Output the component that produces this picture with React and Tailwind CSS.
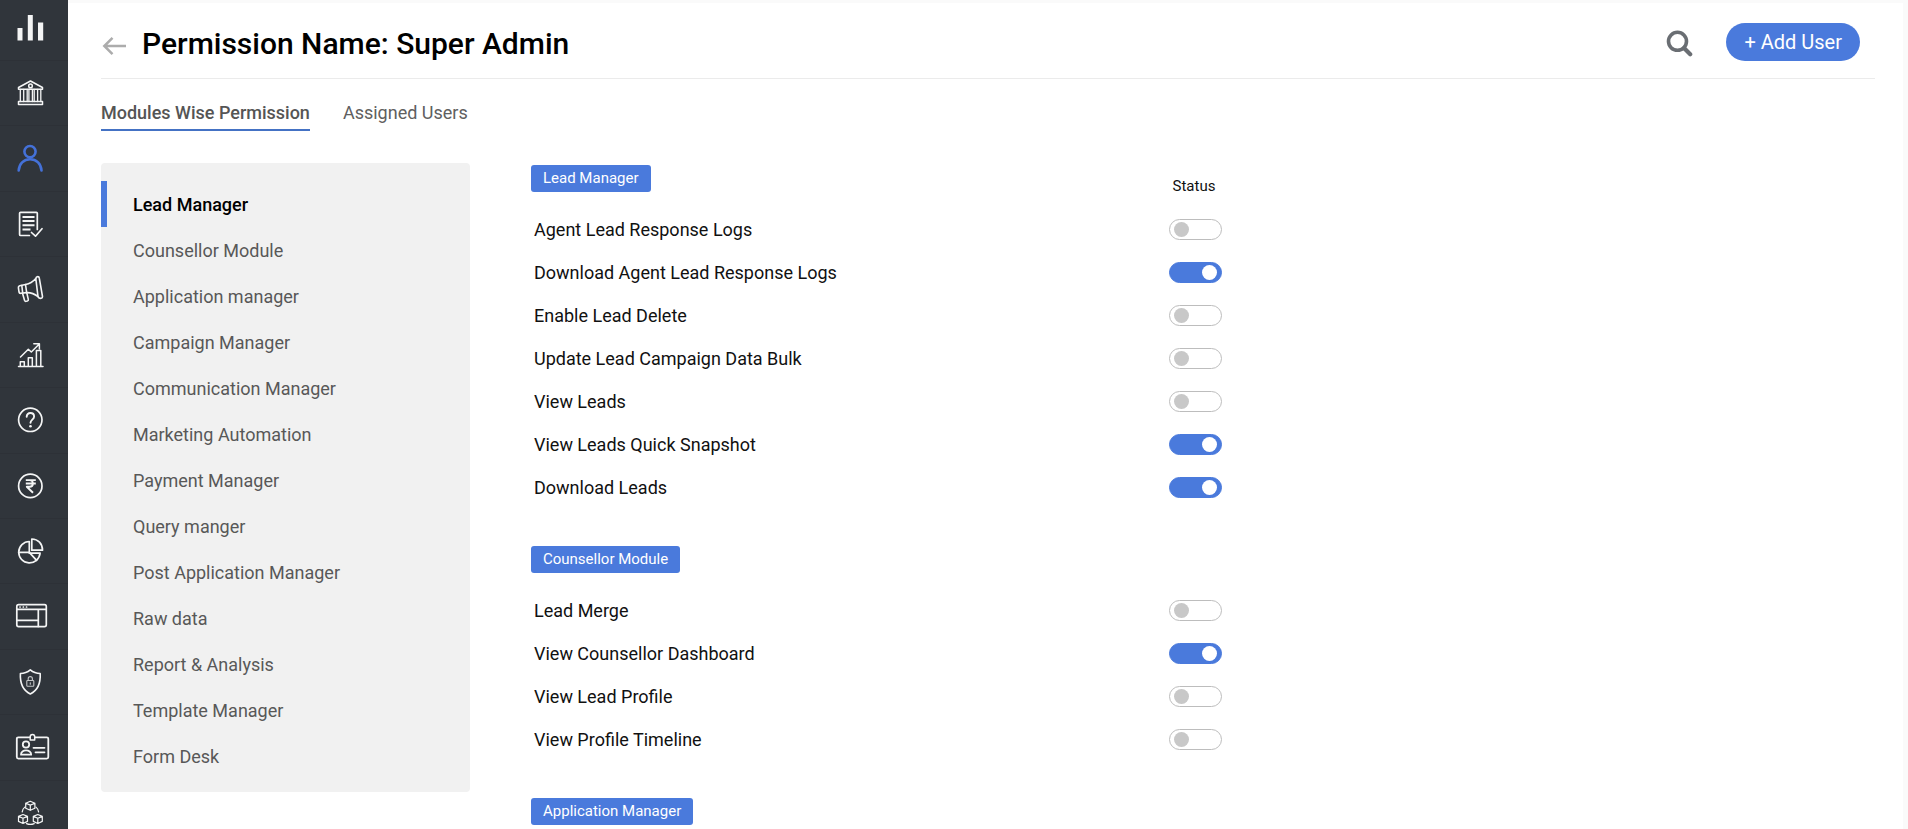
import { useState } from "react";

const navItems = [
  {
    name: "Dashboard",
    art: (
      <g fill="currentColor" stroke="none">
        <rect x="7.5" y="20" width="5" height="12.5" />
        <rect x="17.8" y="7" width="5" height="25.5" />
        <rect x="28" y="14.5" width="5.2" height="18" />
      </g>
    ),
  },
  {
    name: "Institution",
    art: (
      <g strokeWidth="1.5">
        <path d="M8.5 14.5 20.5 8l12 6.5v1.8h-24z" />
        <circle cx="20.5" cy="12.9" r="1.8" />
        <path d="M10.3 16.5v12M13.7 16.5v12M17.2 16.5v12M18.9 16.5v12M22.4 16.5v12M24.2 16.5v12M27.6 16.5v12M30.8 16.5v12" strokeWidth="1.3" />
        <rect x="8.5" y="28.6" width="24" height="2.8" />
      </g>
    ),
  },
  {
    name: "Users",
    active: true,
    art: (
      <g strokeWidth="2.6">
        <circle cx="20" cy="13.6" r="5.6" />
        <path d="M8.7 32.5c.4-6.7 5-11.2 11.4-11.2s11 4.5 11.4 11.2" />
      </g>
    ),
  },
  {
    name: "Applications",
    art: (
      <g strokeWidth="1.7">
        <path d="M27.3 25.5V9.3q0-1-1-1H10.6q-1 0-1 1v21.2q0 1 1 1h8.8" />
        <path d="M12.5 12.9h12M12.5 17h12M12.5 21.2h12M12.5 25.5h8" strokeWidth="2" strokeLinecap="butt" />
        <path d="m21.500 28.500 4 3.700 6.500-7.500" />
      </g>
    ),
  },
  {
    name: "Campaigns",
    art: (
      <g strokeWidth="1.6">
        <path d="m15.500 15.500-5.800 1.200q-1.500.4-1.300 2l.6 4.300q.3 1.500 1.800 1.300l5.900-.7c4.500-.2 8 1.400 11.300 4L25.800 9.500c-2.600 3-5.800 5.200-10.300 6z" />
        <path d="M25.800 9.500q.3-1.900 2-1.900 1.300 0 1.500 1.600l3.200 18.300q.1 1.500-1.300 1.800-2.200.4-3.200-1.700M15.500 15.500l1.200 8.100M11.800 16.500l.9 7.500" />
        <path d="m12.500 24.300 2 7q.5 1.200 1.600 1l1.300-.3q1.200-.4.900-1.600l-1.500-6.500" />
      </g>
    ),
  },
  {
    name: "Analytics",
    art: (
      <g strokeWidth="1.5">
        <path d="M8.5 31.6h24.500M10.300 31.300v-4.500h4v4.500M18.300 31.300v-8.500h4v8.500M26.400 31.300V15.500h4.400v15.800" />
        <path d="m10.500 22 7.800-7.800 3 2.800 7.500-7.500M23.800 8.700h5.600v5.200" />
      </g>
    ),
  },
  {
    name: "Help",
    art: (
      <g>
        <circle cx="20.3" cy="19.8" r="11.7" strokeWidth="1.7" />
        <path d="M16.7 16.700c0-2.300 1.600-3.700 3.700-3.700s3.700 1.400 3.700 3.500c0 3-3.600 3.200-3.600 6.300" strokeWidth="1.9" />
        <circle cx="20.5" cy="26.3" r="1.3" fill="currentColor" stroke="none" />
      </g>
    ),
  },
  {
    name: "Payments",
    art: (
      <g>
        <circle cx="20.3" cy="19.9" r="11.7" strokeWidth="1.7" />
        <path d="M15.800 14.100h10M15.800 17.500h10M15.800 14.100h3.700c4.500 0 4.500 6.700 0 6.700h-2.700l6.200 6" strokeWidth="1.9" strokeLinecap="butt" />
      </g>
    ),
  },
  {
    name: "Reports",
    art: (
      <g strokeWidth="1.7">
        <path d="M19.300 10.500a10.700 10.700 0 1 0 10.800 11.700H19.300z" />
        <path d="M21.800 8v11.200H32.500C32.500 12.500 28 8.300 21.800 8zM8.700 21.400h10.600l7.300 8" />
      </g>
    ),
  },
  {
    name: "Pages",
    art: (
      <g strokeWidth="1.7">
        <rect x="6.8" y="8.6" width="29.5" height="22" rx="1.8" />
        <path d="M7 13.300h29M28.300 13.300v17.200M7 24.300h21.300M10 11h.1M13.300 11h.1M16.500 11h.1" />
      </g>
    ),
  },
  {
    name: "Security",
    art: (
      <g strokeWidth="1.6">
        <path d="M20.300 7.800c3 2.500 6.300 3.600 9.900 3.700.5 9.500-2.200 16.700-9.900 20.500-7.700-3.800-10.400-11-9.900-20.500 3.600-.1 6.900-1.200 9.900-3.700z" />
        <g strokeWidth="1.1" opacity=".75">
          <rect x="16.800" y="18.500" width="7" height="5.800" rx=".8" />
          <path d="M18.200 18.400v-1.700c0-2.700 4.200-2.700 4.200 0v1.700M20.300 20.800v1.400" />
        </g>
      </g>
    ),
  },
  {
    name: "Identity",
    art: (
      <g strokeWidth="1.8">
        <path d="M19.800 10.300H8.300q-1.500 0-1.500 1.500v18.300q0 1.500 1.500 1.500h28.500q1.500 0 1.500-1.500V11.800q0-1.500-1.500-1.500H25" />
        <path d="M20.200 13v-3.200c0-3.200 4.500-3.200 4.500 0V13z" strokeWidth="1.5" />
        <circle cx="16" cy="17.500" r="3.200" />
        <path d="M11 27.700c-.3-5.800 10.400-5.800 10.200 0zM23.500 20.800h11M25.500 25.300h9" />
      </g>
    ),
  },
  {
    name: "Integrations",
    art: (
      <g strokeWidth="1.2">
        <path d="m20.300 8.300 4.600 1.900v5l-4.600 2.100-4.600-2.100v-5zM15.700 10.200l4.600 1.900 4.600-1.900M20.300 12.100v5.200" />
        <path d="m13 21.500 4.500 1.900v5L13 30.500l-4.500-2.100v-5zM8.500 23.400l4.500 1.900 4.500-1.900M13 25.300v5.200" />
        <path d="m27.800 21.500 4.500 1.900v5l-4.500 2.100-4.500-2.100v-5zM23.300 23.400l4.500 1.900 4.500-1.900M27.800 25.300v5.200" />
        <path d="M12.200 18.800q.5-3 2.600-4.700M28.600 18.800q-.5-3-2.600-4.700M16.500 30.600q3.800 1.600 7.700 0" />
      </g>
    ),
  },
];

const modules = [
  "Lead Manager",
  "Counsellor Module",
  "Application manager",
  "Campaign Manager",
  "Communication Manager",
  "Marketing Automation",
  "Payment Manager",
  "Query manger",
  "Post Application Manager",
  "Raw data",
  "Report & Analysis",
  "Template Manager",
  "Form Desk",
];

const sections = [
  {
    title: "Lead Manager",
    showStatus: true,
    rows: [
      ["Agent Lead Response Logs", false],
      ["Download Agent Lead Response Logs", true],
      ["Enable Lead Delete", false],
      ["Update Lead Campaign Data Bulk", false],
      ["View Leads", false],
      ["View Leads Quick Snapshot", true],
      ["Download Leads", true],
    ],
  },
  {
    title: "Counsellor Module",
    rows: [
      ["Lead Merge", false],
      ["View Counsellor Dashboard", true],
      ["View Lead Profile", false],
      ["View Profile Timeline", false],
    ],
  },
  { title: "Application Manager", rows: [] },
];

function Sidebar() {
  return (
    <nav className="sticky top-0 h-screen w-[68px] shrink-0 overflow-hidden bg-[#30353b]">
      <ul className="flex h-[846px] flex-col">
        {navItems.map((item, i) => (
          <li
            key={item.name}
            className={
              i === 0
                ? "h-[61px] shrink-0 border-b border-[#2d3137] pt-2"
                : "flex-1 border-b border-[#2d3137] pt-3"
            }
          >
            <a
              href="#"
              aria-label={item.name}
              className={item.active ? "ml-[10px] block w-10 text-[#4471d8]" : "ml-[10px] block w-10 text-[#f4f5f5]"}
            >
              <svg
                viewBox="0 0 40 40"
                className="block size-10"
                fill="none"
                stroke="currentColor"
                strokeLinecap="round"
                strokeLinejoin="round"
                aria-hidden="true"
              >
                {item.art}
              </svg>
            </a>
          </li>
        ))}
      </ul>
    </nav>
  );
}

function Toggle({ id, defaultChecked }) {
  return (
    <input
      id={id}
      type="checkbox"
      role="switch"
      defaultChecked={defaultChecked}
      className="flex h-[21px] w-[53px] cursor-pointer appearance-none items-center rounded-full border border-[#bdbdbd] bg-white px-1 before:block before:size-[15px] before:rounded-full before:bg-[#c8c8c8] checked:justify-end checked:border-[#4a7adc] checked:bg-[#4a7adc] checked:before:bg-white"
    />
  );
}

function PermissionTable({ section, index }) {
  return (
    <table className="w-full table-fixed border-collapse">
      <thead>
        <tr className="h-[43px]">
          <th scope="col" className="p-0 text-left align-top">
            <span className="inline-block rounded-[3px] bg-[#4a7adc] px-3 text-[15px] leading-[27px] font-normal text-white">
              {section.title}
            </span>
          </th>
          <th scope="col" className="w-[54px] p-0 pr-1 text-center text-[15px] font-normal" aria-label="Status">
            {section.showStatus ? "Status" : null}
          </th>
        </tr>
      </thead>
      <tbody>
        {section.rows.map(([label, on], i) => (
          <tr key={label} className="h-[43px]">
            <td className="p-0 pl-[3px] text-[18px] leading-6">
              <label htmlFor={`perm-${index}-${i}`}>{label}</label>
            </td>
            <td className="p-0">
              <Toggle id={`perm-${index}-${i}`} defaultChecked={on} />
            </td>
          </tr>
        ))}
      </tbody>
    </table>
  );
}

export default function App() {
  const [current, setCurrent] = useState("Lead Manager");
  return (
    <div className="flex h-screen overflow-hidden bg-white font-[Roboto,'Liberation_Sans',sans-serif] text-[#111]">
      <Sidebar />
      <main className="min-w-0 flex-1 border-t-[3px] border-r-[5px] border-[#fafafa] pr-7 pl-[33px]">
        <header className="flex h-[76px] items-center border-b border-[#ebebeb] pt-0.5 pr-[15px]">
          <button type="button" aria-label="Back" className="mt-2 mr-[15px] text-[#acacac]">
            <svg viewBox="0 0 26 20" className="block h-5 w-[26px]" fill="none" stroke="currentColor" strokeWidth="2.5" aria-hidden="true">
              <path d="M25 10H3.500M11.500 1.800 3.300 10l8.200 8.200" />
            </svg>
          </button>
          <h1 className="mt-1 text-[30px] leading-9 font-medium text-black">Permission Name: Super Admin</h1>
          <button type="button" aria-label="Search" className="mt-1 mr-[33px] ml-auto text-[#6a6e73]">
            <svg viewBox="0 0 28 28" className="block size-7" fill="none" stroke="currentColor" aria-hidden="true">
              <circle cx="12.5" cy="11.3" r="9" strokeWidth="3.6" />
              <path d="m19 18 6.200 6.200" strokeWidth="4.2" strokeLinecap="round" />
            </svg>
          </button>
          <button type="button" className="h-[38px] rounded-full bg-[#4a7adc] px-[18px] text-[20px] text-white">
            + Add User
          </button>
        </header>

        <div role="tablist" className="mt-5 flex gap-[33px] text-[18px] leading-7 text-[#606060]">
          <button type="button" role="tab" aria-selected="true" className="border-b-2 border-[#4472c4] pb-0.5 font-medium text-[#555]">
            Modules Wise Permission
          </button>
          <button type="button" role="tab" aria-selected="false" className="border-b-2 border-transparent pb-0.5">
            Assigned Users
          </button>
        </div>

        <div className="mt-8 flex items-start gap-[61px]">
          <ul className="w-[369px] shrink-0 rounded-[4px] bg-[#f1f1f1] pt-[18px] pb-[13px]">
            {modules.map((name) => (
              <li key={name}>
                <button
                  type="button"
                  onClick={() => setCurrent(name)}
                  className={
                    name === current
                      ? "block h-[46px] w-full border-l-6 border-[#4a7adc] pl-[26px] text-left text-[18px] font-medium text-black"
                      : "block h-[46px] w-full border-l-6 border-transparent pl-[26px] text-left text-[18px] text-[#585858]"
                  }
                >
                  {name}
                </button>
              </li>
            ))}
          </ul>
          <div className="flex max-w-[692px] flex-1 flex-col gap-[37px] pt-0.5">
            {sections.map((section, i) => (
              <PermissionTable key={section.title} section={section} index={i} />
            ))}
          </div>
        </div>
      </main>
    </div>
  );
}
